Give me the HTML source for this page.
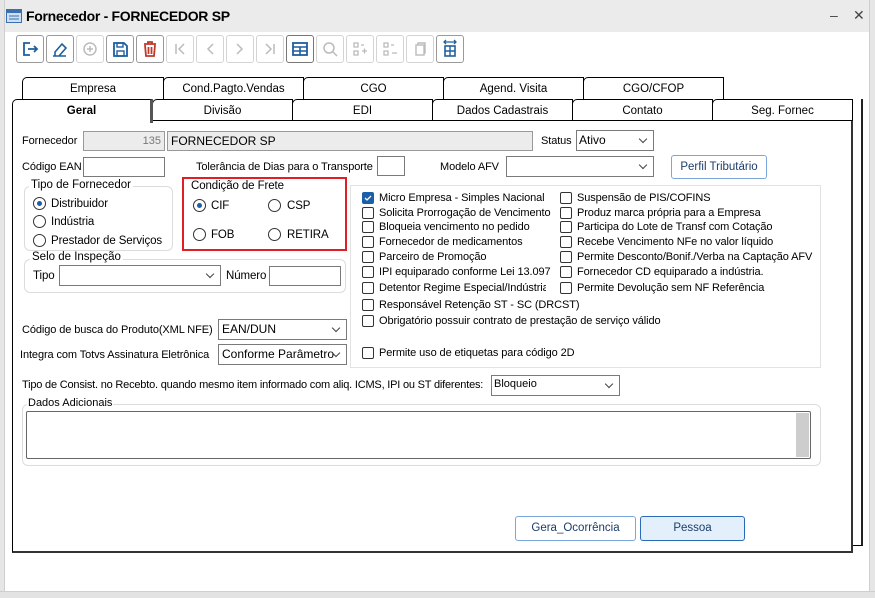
<!DOCTYPE html>
<html><head><meta charset="utf-8"><style>
*{box-sizing:border-box;margin:0;padding:0}
body{width:875px;height:598px;background:#fff;font-family:"Liberation Sans",sans-serif;font-size:11px;color:#000;position:relative;overflow:hidden}
.a{position:absolute}
.t{position:absolute;white-space:nowrap;font-size:11px;letter-spacing:-0.1px;margin-top:1px}
.in{position:absolute;border:1px solid #7a7a7a;background:#fff;height:20px;font-size:11px}
.sel{position:absolute;border:1px solid #7a7a7a;background:#fff;height:21px;padding:3px 3px;white-space:nowrap;font-size:11px}
.sel:after{content:"";position:absolute;right:7px;top:5px;width:5px;height:5px;border-right:1.3px solid #444;border-bottom:1.3px solid #444;transform:rotate(45deg)}
.tb{position:absolute;top:35px;width:28px;height:28px;border:1px solid #9a9a9a;border-radius:3px;background:#fff}
.tb.d{border-color:#d4d4d4}
.tab{position:absolute;height:23px;border:1px solid #000;border-bottom:none;border-top-left-radius:5px;background:#fff;text-align:center;line-height:22px;font-size:11.5px}
.rad{position:absolute;width:13px;height:13px;border:1px solid #333;border-radius:50%;background:#fff}
.rad.on:after{content:"";position:absolute;left:3px;top:3px;width:5px;height:5px;border-radius:50%;background:#1a5fa8}
.cb{position:absolute;width:12px;height:12px;border:1px solid #333;border-radius:2px;background:#fff}
.grp{position:absolute;border:1px solid #dcdcdc;border-radius:6px}
.gl{position:absolute;background:#fff;padding:0 2px;white-space:nowrap;font-size:11.5px}
.btn{position:absolute;border:1px solid #5b8ec9;border-radius:3px;background:#fff;text-align:center;color:#1b3d6b;font-size:11.5px}
</style></head><body>
<div class="a" style="left:0;top:0;width:875px;height:32px;background:#ebebeb"></div>
<div class="a" style="left:0;top:0;width:5px;height:598px;background:#e6e6e6;border-right:1px solid #cfcfcf"></div>
<div class="a" style="right:0;top:0;width:6px;height:598px;background:#e6e6e6;border-left:1px solid #cfcfcf"></div>
<div class="a" style="left:0;top:591px;width:875px;height:7px;background:#e3e3e3;border-top:1px solid #cfcfcf"></div>
<svg class="a" style="left:6px;top:9px" width="16" height="14"><rect x="0.5" y="0.5" width="15" height="13" fill="#cfe0f5" stroke="#3a6fb0"/><rect x="1" y="1" width="14" height="3" fill="#3a6fb0"/><line x1="3" y1="7" x2="13" y2="7" stroke="#3a6fb0"/><line x1="3" y1="10" x2="13" y2="10" stroke="#3a6fb0"/></svg>
<div class="t" style="left:26px;top:7px;font-size:14px;font-weight:bold;letter-spacing:-0.3px">Fornecedor - FORNECEDOR SP</div>
<div class="t" style="left:830px;top:6px;font-size:14px;color:#444">–</div>
<div class="t" style="left:853px;top:6px;font-size:14px;color:#444">✕</div>

<div class="tb" style="left:16px"><svg width="26" height="26"><path d="M13 7H7v12h6M11 13h9M17 10l3 3-3 3" fill="none" stroke="#1f5f9e" stroke-width="1.8"/></svg></div>
<div class="tb" style="left:46px"><svg width="26" height="26"><path d="M8 16l7-8 4 4-7 8H8z M6 20h13" fill="none" stroke="#1f5f9e" stroke-width="1.6"/></svg></div>
<div class="tb d" style="left:76px"><svg width="26" height="26"><circle cx="13" cy="13" r="6" fill="none" stroke="#bbb" stroke-width="1.5"/><path d="M13 10v6M10 13h6" stroke="#bbb" stroke-width="1.5"/></svg></div>
<div class="tb" style="left:106px"><svg width="26" height="26"><path d="M7 7h10l3 3v10H7z" fill="none" stroke="#1f5f9e" stroke-width="1.8"/><rect x="10" y="7" width="6" height="4" fill="none" stroke="#1f5f9e" stroke-width="1.4"/><rect x="10" y="15" width="7" height="5" fill="none" stroke="#1f5f9e" stroke-width="1.4"/></svg></div>
<div class="tb" style="left:136px"><svg width="26" height="26"><path d="M7 8h12M11 8V6h4v2M8 9l1 11h8l1-11M11.5 11v7M14.5 11v7" fill="none" stroke="#c0392b" stroke-width="1.8"/></svg></div>
<div class="tb d" style="left:166px"><svg width="26" height="26"><path d="M9 8v10M17 8l-5 5 5 5" fill="none" stroke="#bbb" stroke-width="1.5"/></svg></div>
<div class="tb d" style="left:196px"><svg width="26" height="26"><path d="M16 8l-5 5 5 5" fill="none" stroke="#bbb" stroke-width="1.5"/></svg></div>
<div class="tb d" style="left:226px"><svg width="26" height="26"><path d="M10 8l5 5-5 5" fill="none" stroke="#bbb" stroke-width="1.5"/></svg></div>
<div class="tb d" style="left:256px"><svg width="26" height="26"><path d="M9 8l5 5-5 5M17 8v10" fill="none" stroke="#bbb" stroke-width="1.5"/></svg></div>
<div class="tb" style="left:286px;border-color:#777"><svg width="26" height="26"><rect x="6" y="7" width="14" height="12" fill="none" stroke="#1f5f9e" stroke-width="1.8"/><path d="M6 11h14M6 15h14M13 11v8" stroke="#1f5f9e" stroke-width="1.6"/></svg></div>
<div class="tb d" style="left:316px"><svg width="26" height="26"><circle cx="12" cy="12" r="5" fill="none" stroke="#bbb" stroke-width="1.5"/><path d="M16 16l4 4" stroke="#bbb" stroke-width="1.5"/></svg></div>
<div class="tb d" style="left:346px"><svg width="26" height="26"><path d="M7 7h4v4H7zM7 15h4v4H7zM14 9h3M15 15h5M17.5 12.5v5" fill="none" stroke="#bbb" stroke-width="1.3"/></svg></div>
<div class="tb d" style="left:376px"><svg width="26" height="26"><path d="M7 7h4v4H7zM7 15h4v4H7zM14 9h3M15 17h5" fill="none" stroke="#bbb" stroke-width="1.3"/></svg></div>
<div class="tb d" style="left:406px"><svg width="26" height="26"><rect x="9" y="9" width="8" height="10" fill="none" stroke="#bbb" stroke-width="1.4"/><path d="M11 9V7h7v10h-1" fill="none" stroke="#bbb" stroke-width="1.4"/></svg></div>
<div class="tb" style="left:436px"><svg width="26" height="26"><path d="M7 6h12M9 4l-2 2 2 2M17 4l2 2-2 2" fill="none" stroke="#1f5f9e" stroke-width="1.3"/><rect x="8" y="10" width="10" height="10" fill="none" stroke="#1f5f9e" stroke-width="1.6"/><path d="M8 15h10M13 10v10" stroke="#1f5f9e" stroke-width="1.4"/></svg></div>

<div class="a" style="left:22px;top:99px;width:841px;height:447px;border:1px solid #000;border-left:none;border-top:none;border-right:2px solid #222"></div>
<div class="tab" style="left:22px;top:77px;width:142px">Empresa</div>
<div class="tab" style="left:163px;top:77px;width:141px">Cond.Pagto.Vendas</div>
<div class="tab" style="left:303px;top:77px;width:141px">CGO</div>
<div class="tab" style="left:443px;top:77px;width:141px">Agend. Visita</div>
<div class="tab" style="left:583px;top:77px;width:141px">CGO/CFOP</div>
<div class="tab" style="left:152px;top:99px;width:141px;border-bottom:1px solid #000">Divisão</div>
<div class="tab" style="left:292px;top:99px;width:141px;border-bottom:1px solid #000">EDI</div>
<div class="tab" style="left:432px;top:99px;width:141px;border-bottom:1px solid #000">Dados Cadastrais</div>
<div class="tab" style="left:572px;top:99px;width:141px;border-bottom:1px solid #000">Contato</div>
<div class="tab" style="left:712px;top:99px;width:141px;border-bottom:1px solid #000">Seg. Fornec</div>
<div class="a" style="left:12px;top:121px;width:841px;height:432px;border:1px solid #000;border-top:none;border-right:2px solid #333;border-bottom:2px solid #333;background:#fff"></div>
<div class="a" style="left:12px;top:120px;width:841px;border-top:1px solid #000"></div>
<div class="tab" style="left:12px;top:99px;width:141px;height:24px;font-weight:bold;border-right:3px solid #555">Geral</div>

<div class="t" style="left:22px;top:134px">Fornecedor</div>
<div class="in" style="left:83px;top:131px;width:82px;background:#ececec;border-color:#999;text-align:right;padding:3px 3px;color:#777">135</div>
<div class="in" style="left:167px;top:131px;width:366px;background:#ececec;border-color:#999;padding:2px 3px;font-size:12px">FORNECEDOR SP</div>
<div class="t" style="left:541px;top:134px">Status</div>
<div class="sel" style="left:576px;top:130px;width:78px;padding:2px 2px;font-size:12px">Ativo</div>
<div class="t" style="left:22px;top:160px">Código EAN</div>
<div class="in" style="left:83px;top:157px;width:82px"></div>
<div class="t" style="left:196px;top:160px">Tolerância de Dias para o Transporte</div>
<div class="in" style="left:377px;top:156px;width:28px"></div>
<div class="t" style="left:440px;top:160px">Modelo AFV</div>
<div class="sel" style="left:506px;top:156px;width:148px"></div>
<div class="btn" style="left:671px;top:155px;width:96px;height:24px;line-height:22px;border-color:#7aa7dc">Perfil Tributário</div>

<div class="grp" style="left:24px;top:186px;width:149px;height:65px"></div>
<div class="gl" style="left:29px;top:179px">Tipo de Fornecedor</div>
<div class="rad on" style="left:33px;top:197px"></div><div class="t" style="left:51px;top:197px;font-size:11.5px">Distribuidor</div>
<div class="rad" style="left:33px;top:215px"></div><div class="t" style="left:51px;top:215px;font-size:11.5px">Indústria</div>
<div class="rad" style="left:33px;top:234px"></div><div class="t" style="left:51px;top:234px;font-size:11.5px">Prestador de Serviços</div>

<div class="a" style="left:182px;top:177px;width:165px;height:74px;border:2px solid #e01e25"></div>
<div class="t" style="left:191px;top:179px;font-size:11.5px">Condição de Frete</div>
<div class="rad on" style="left:193px;top:199px"></div><div class="t" style="left:211px;top:199px;font-size:11.5px">CIF</div>
<div class="rad" style="left:268px;top:199px"></div><div class="t" style="left:287px;top:199px;font-size:11.5px">CSP</div>
<div class="rad" style="left:193px;top:228px"></div><div class="t" style="left:211px;top:228px;font-size:11.5px">FOB</div>
<div class="rad" style="left:268px;top:228px"></div><div class="t" style="left:287px;top:228px;font-size:11.5px">RETIRA</div>

<div class="grp" style="left:24px;top:259px;width:322px;height:34px"></div>
<div class="gl" style="left:30px;top:251px">Selo de Inspeção</div>
<div class="t" style="left:33px;top:269px;font-size:11.5px">Tipo</div>
<div class="sel" style="left:59px;top:265px;width:162px"></div>
<div class="t" style="left:226px;top:269px;font-size:11.5px">Número</div>
<div class="in" style="left:269px;top:266px;width:72px"></div>

<div class="a" style="left:350px;top:185px;width:471px;height:183px;border:1px solid #e2e2e2"></div>
<div class="cb" style="left:362px;top:192px;background:#1a5fa8;border-color:#1a5fa8"><svg width="10" height="10" style="position:absolute;left:0;top:0"><path d="M2 5l2 2 4-4" fill="none" stroke="#fff" stroke-width="1.3"/></svg></div>
<div class="t" style="left:379px;top:191px">Micro Empresa - Simples Nacional</div>
<div class="cb" style="left:362px;top:207px"></div><div class="t" style="left:379px;top:206px">Solicita Prorrogação de Vencimento</div>
<div class="cb" style="left:362px;top:221px"></div><div class="t" style="left:379px;top:220px">Bloqueia vencimento no pedido</div>
<div class="cb" style="left:362px;top:236px"></div><div class="t" style="left:379px;top:235px">Fornecedor de medicamentos</div>
<div class="cb" style="left:362px;top:251px"></div><div class="t" style="left:379px;top:250px">Parceiro de Promoção</div>
<div class="cb" style="left:362px;top:266px"></div><div class="t" style="left:379px;top:265px">IPI equiparado conforme Lei 13.097</div>
<div class="cb" style="left:362px;top:282px"></div><div class="t" style="left:379px;top:281px;width:167px;overflow:hidden">Detentor Regime Especial/Indústria</div>
<div class="cb" style="left:362px;top:299px"></div><div class="t" style="left:379px;top:298px">Responsável Retenção ST - SC (DRCST)</div>
<div class="cb" style="left:362px;top:315px"></div><div class="t" style="left:379px;top:314px">Obrigatório possuir contrato de prestação de serviço válido</div>
<div class="cb" style="left:362px;top:347px"></div><div class="t" style="left:379px;top:346px">Permite uso de etiquetas para código 2D</div>

<div class="cb" style="left:560px;top:192px"></div><div class="t" style="left:577px;top:191px">Suspensão de PIS/COFINS</div>
<div class="cb" style="left:560px;top:207px"></div><div class="t" style="left:577px;top:206px">Produz marca própria para a Empresa</div>
<div class="cb" style="left:560px;top:221px"></div><div class="t" style="left:577px;top:220px">Participa do Lote de Transf com Cotação</div>
<div class="cb" style="left:560px;top:236px"></div><div class="t" style="left:577px;top:235px">Recebe Vencimento NFe no valor líquido</div>
<div class="cb" style="left:560px;top:251px"></div><div class="t" style="left:577px;top:250px">Permite Desconto/Bonif./Verba na Captação AFV</div>
<div class="cb" style="left:560px;top:266px"></div><div class="t" style="left:577px;top:265px">Fornecedor CD equiparado a indústria.</div>
<div class="cb" style="left:560px;top:282px"></div><div class="t" style="left:577px;top:281px">Permite Devolução sem NF Referência</div>

<div class="t" style="left:22px;top:323px">Código de busca do Produto(XML NFE)</div>
<div class="sel" style="left:218px;top:319px;width:129px;font-size:12px;padding:2px 3px">EAN/DUN</div>
<div class="t" style="left:20px;top:348px">Integra com Totvs Assinatura Eletrônica</div>
<div class="sel" style="left:218px;top:344px;width:129px;font-size:12px;padding:2px 3px">Conforme Parâmetro</div>

<div class="t" style="left:22px;top:378px;font-size:11px;letter-spacing:-0.2px">Tipo de Consist. no Recebto. quando mesmo item informado com aliq. ICMS, IPI ou ST diferentes:</div>
<div class="sel" style="left:491px;top:375px;width:129px;padding:2px 2px">Bloqueio</div>

<div class="grp" style="left:22px;top:404px;width:799px;height:62px"></div>
<div class="gl" style="left:27px;top:397px;padding:0 1px;font-size:11px">Dados Adicionais</div>
<div class="a" style="left:26px;top:411px;width:785px;height:48px;border:1px solid #666;border-radius:2px;background:#fff"></div>
<div class="a" style="left:796px;top:413px;width:13px;height:44px;background:#cdcdcd"></div>

<div class="btn" style="left:515px;top:516px;width:121px;height:25px;line-height:23px;border-color:#7aa7dc">Gera_Ocorrência</div>
<div class="btn" style="left:640px;top:516px;width:105px;height:25px;line-height:23px;background:#e3f0fc;border-color:#2a6bb8">Pessoa</div>
</body></html>
